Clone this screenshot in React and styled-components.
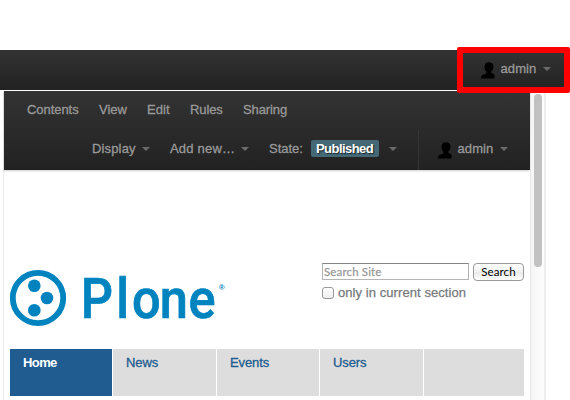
import React from "react";
import styled, { createGlobalStyle } from "styled-components";

const GlobalStyle = createGlobalStyle`
  * { box-sizing: border-box; }
  body {
    margin: 0;
    background: #fff;
    font: 13px/20px "Liberation Sans", Arial, sans-serif;
    overflow: hidden;
  }
`;

const Screen = styled.div`
  position: relative;
  width: 570px;
  height: 400px;
  padding-top: 50px;
  overflow: hidden;
`;

const TopBar = styled.header`
  display: flex;
  align-items: flex-start;
  height: 40px;
  padding: 9px 0 0 481px;
  background: linear-gradient(#333, #222);
`;

const Body = styled.div`
  display: flex;
  height: 309px;
  margin-top: 1px;
`;

const Frame = styled.main`
  width: 527px;
  margin-left: 3px;
  border-left: 1px solid #ececec;
`;

const Toolbar = styled.div`
  height: 79px;
  padding-top: 9px;
  background: linear-gradient(#333, #222);
  box-shadow: 0 1px 2px rgba(0, 0, 0, 0.2);
`;

const MenuRow = styled.nav`
  display: flex;
  align-items: flex-start;
  height: ${(p) => p.$height}px;
  padding-left: ${(p) => p.$indent}px;
`;

const MenuItem = styled.span`
  display: flex;
  flex: none;
  width: ${(p) => p.$width}px;
  color: #999;
  white-space: nowrap;
  -webkit-text-stroke: 0.3px #999;
`;

const MenuText = styled.span`
  width: ${(p) => p.$width}px;
  letter-spacing: ${(p) => p.$spacing || 0}px;
`;

const Caret = styled.i`
  width: 8px;
  height: 4px;
  margin-top: 8px;
  border: 4px solid transparent;
  border-top-color: #6a6a6a;
  border-bottom: 0;
`;

const Badge = styled.span`
  flex: none;
  width: 68px;
  height: 17px;
  margin: 1px 10px 0 0;
  padding-left: 5px;
  border-radius: 2px;
  background: #446876;
  color: #fff;
  font-weight: bold;
  line-height: 17px;
  letter-spacing: -0.55px;
  text-shadow: 1px 1px 1px #17262d;
`;

const Account = styled.div`
  display: flex;
  height: 40px;
  margin: ${(p) => (p.$divided ? "-9px 0 0 21px" : "0")};
  padding: ${(p) => (p.$divided ? "9px 0 0 19px" : "0")};
  border-left: ${(p) => (p.$divided ? "1px solid #353535" : "0")};
`;

const UserGlyph = styled.svg`
  flex: none;
  width: 14px;
  height: 17px;
  margin: 3px 6px 0 -0.5px;
`;

const Header = styled.section`
  display: flex;
  height: 179px;
  padding: 93px 0 0 6px;
`;

const Logo = styled.svg`
  flex: none;
  width: 222px;
  height: 70px;
  margin-top: 4px;
  overflow: visible;
`;

const Search = styled.form`
  margin-left: 90px;
`;

const SearchLine = styled.div`
  display: flex;
  gap: 4px;
`;

const Field = styled.div`
  width: 147px;
  height: 17px;
  padding-left: 1px;
  border: 1px solid #b4b4b4;
  border-top-color: #858585;
  color: #999;
  font: 11.5px/15px Lato, sans-serif;
  letter-spacing: 0.15px;
  -webkit-text-stroke: 0.25px #999;
`;

const SearchButton = styled.button`
  width: 51px;
  height: 18px;
  padding: 0;
  border: 1px solid #999;
  border-radius: 4px;
  background: linear-gradient(#fff, #f1f1f1 50%, #e9e9e9 51%, #fff);
  color: #000;
  font: 11.5px/14px Lato, sans-serif;
  letter-spacing: 0.1px;
`;

const Scope = styled.label`
  display: flex;
  align-items: center;
  gap: 4px;
  margin-top: 1px;
  height: 22px;
  color: #76797c;
  letter-spacing: 0.07px;
  -webkit-text-stroke: 0.25px #76797c;
`;

const Box = styled.span`
  width: 12px;
  height: 12px;
  border: 1px solid #999;
  border-radius: 3px;
  background: linear-gradient(#fff, #eee);
`;

const Tabs = styled.nav`
  display: grid;
  grid-template-columns: 102px 103px 102px 103px 100px;
  gap: 1px;
  width: 514px;
  height: 47px;
  margin-left: 6px;
`;

const Tab = styled.a`
  padding: 4px 0 0 13px;
  background: ${(p) => (p.$active ? "#205c90" : "#ddd")};
  color: ${(p) => (p.$active ? "#fff" : "#205c90")};
  font-weight: ${(p) => (p.$active ? "bold" : "normal")};
  letter-spacing: ${(p) => (p.$active ? -0.6 : -0.1)}px;
  -webkit-text-stroke: ${(p) => (p.$active ? "0" : "0.3px #205c90")};
`;

const ScrollTrack = styled.aside`
  width: 16px;
  padding: 3px 0 0 3px;
  border-left: 1px solid #e6e6e6;
  border-right: 2px solid #eee;
  background: linear-gradient(90deg, #f5f5f5, #fdfdfd);
`;

const ScrollThumb = styled.div`
  width: 8px;
  height: 173px;
  border-radius: 4px;
  background: #c1c1c1;
`;

const Highlight = styled.div`
  position: absolute;
  left: 457px;
  top: 47px;
  width: 113px;
  height: 46px;
  border: 6px solid #f00;
  border-radius: 2px;
`;

function User({ divided }) {
  return (
    <Account $divided={divided}>
      <UserGlyph viewBox="0 0 14 17">
        <path
          fill="#000"
          d="M7.8.2C5 .2 3.400 2.100 3.500 5c0 2.100.8 3.800 1.800 4.600v1.800L1.400 13C.5 13.400 0 14.500 0 16.500h13.500v-3.200c0-.9-.5-1.300-1.300-1.600l-1.900-.7V9.500C11.500 8.500 12.500 6.800 12.500 4.500 12.500 1.700 10.500.2 7.800.2Z"
        />
      </UserGlyph>
      <MenuItem>
        <MenuText $width={42} $spacing={0.1}>admin</MenuText>
        <Caret />
      </MenuItem>
    </Account>
  );
}

const actions = [
  ["Contents", 72, -0.05],
  ["View", 48, 0],
  ["Edit", 43, 0.1],
  ["Rules", 53, -0.1],
  ["Sharing", 60, -0.1],
];

const tabs = ["Home", "News", "Events", "Users", ""];

export default function App() {
  return (
    <>
      <GlobalStyle />
      <Screen>
        <TopBar>
          <User />
        </TopBar>
        <Body>
          <Frame>
            <Toolbar>
              <MenuRow $height={39} $indent={23}>
                {actions.map(([name, width, spacing]) => (
                  <MenuItem key={name} $width={width}>
                    <MenuText $spacing={spacing}>{name}</MenuText>
                  </MenuItem>
                ))}
              </MenuRow>
              <MenuRow $height={31} $indent={88}>
                <MenuItem $width={78}>
                  <MenuText $width={50} $spacing={0.15}>Display</MenuText>
                  <Caret />
                </MenuItem>
                <MenuItem $width={99}>
                  <MenuText $width={71} $spacing={0.2}>Add new…</MenuText>
                  <Caret />
                </MenuItem>
                <MenuItem $width={42}>State:</MenuItem>
                <Badge>Published</Badge>
                <Caret />
                <User divided />
              </MenuRow>
            </Toolbar>
            <Header>
              <Logo viewBox="0 0 222 70" aria-label="Plone">
                <g fill="#0083be">
                  <circle cx="28" cy="31" r="25.200" fill="none" stroke="#0083be" strokeWidth="5.800" />
                  <circle cx="24.300" cy="18.800" r="6.300" />
                  <circle cx="37" cy="31" r="6.300" />
                  <circle cx="24.300" cy="43.200" r="6.300" />
                  <text
                    transform="scale(.92 1)"
                    x="76.800 115.500 132.500 162.800 194"
                    y="50.500"
                    fontFamily="Roboto, sans-serif"
                    fontSize="55"
                    fontWeight="500"
                    stroke="#0083be"
                    strokeWidth=".7"
                  >
                    Plone
                  </text>
                  <text x="208.800" y="22.500" fontFamily="Liberation Sans, sans-serif" fontWeight="bold" fontSize="8">
                    ®
                  </text>
                </g>
              </Logo>
              <Search>
                <SearchLine>
                  <Field>Search Site</Field>
                  <SearchButton type="button">Search</SearchButton>
                </SearchLine>
                <Scope>
                  <Box />
                  only in current section
                </Scope>
              </Search>
            </Header>
            <Tabs>
              {tabs.map((name, i) => (
                <Tab key={i} $active={i === 0}>{name}</Tab>
              ))}
            </Tabs>
          </Frame>
          <ScrollTrack>
            <ScrollThumb />
          </ScrollTrack>
        </Body>
        <Highlight />
      </Screen>
    </>
  );
}
